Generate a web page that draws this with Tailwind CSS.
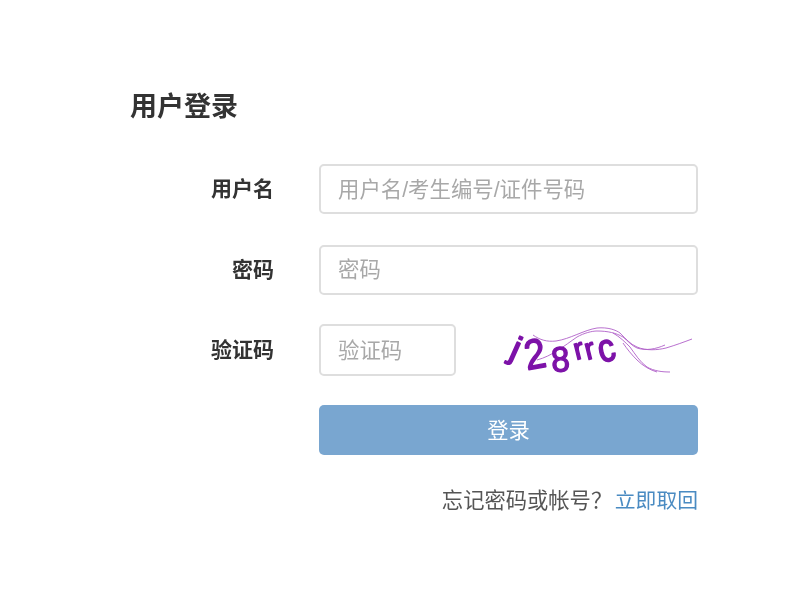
<!DOCTYPE html>
<html lang="zh">
<head>
<meta charset="utf-8">
<script src="https://cdn.jsdelivr.net/npm/@tailwindcss/browser@4"></script>
</head>
<body class="bg-white font-['Liberation_Sans','Noto_Sans_CJK_SC',sans-serif]">
<div class="w-[800px] h-[594px] overflow-hidden pl-[130px] pr-[102px] pt-[91px] text-[#333] blur-[0.5px]">
  <h1 class="text-[27px] leading-[32px] font-bold h-[73px]">用户登录</h1>
  <form class="flex flex-col gap-[30px]">
    <div class="flex items-center h-[50px]">
      <label class="w-[144px] text-right text-[21px] font-bold leading-[50px]">用户名</label>
      <div class="ml-[45px] flex-1 h-[50px] border-2 border-[#dedede] rounded-[5px] pl-[17px] text-[21.4px] leading-[49px] text-[#a8a8a8]">用户名/考生编号/证件号码</div>
    </div>
    <div class="flex items-center h-[50px] mt-px">
      <label class="w-[144px] text-right text-[21px] font-bold leading-[50px]">密码</label>
      <div class="ml-[45px] flex-1 h-[50px] border-2 border-[#dedede] rounded-[5px] pl-[17px] text-[21.4px] leading-[47px] text-[#a8a8a8]">密码</div>
    </div>
    <div class="flex items-center h-[52px] -mt-[1px]">
      <label class="w-[144px] text-right text-[21px] font-bold leading-[50px]">验证码</label>
      <div class="ml-[45px] w-[137px] h-[52px] border-2 border-[#dedede] rounded-[5px] pl-[17px] text-[21.4px] leading-[51px] text-[#a8a8a8]">验证码</div>
      <svg class="ml-[44px] block overflow-visible" width="197" height="52" viewBox="0 0 197 52" fill="none">
        <g stroke="#b060c8" stroke-width="0.9" fill="none">
          <path d="M33 11 C40 16 47 18 56 17 C70 15 84 6 97 4 C108 3 116 6 120 9 C126 15 130 20 137 23 C146 27 158 26 166 24 C176 21 184 18 192 15"/>
          <path d="M37 36 C52 32 64 22 77 13 C84 9 92 7 97 7 C108 7 116 9 123 13 C128 17 132 22 137 24 C146 27 156 25 165 21"/>
          <path d="M113 9 C120 13 125 18 130 23 C135 30 140 38 147 43 C154 47 162 48 170 48"/>
          <path d="M123 19 C127 25 132 31 137 36 C143 42 150 46 157 48"/>
        </g>
        <g fill="#7d12a8" stroke="#7d12a8" stroke-width="1.4" stroke-linejoin="round" font-family="'Liberation Sans',sans-serif">
          <text transform="translate(8 33) rotate(24) scale(1.2 1.1)" font-size="30">j</text>
          <text transform="translate(27 46) rotate(-10) scale(0.95 1.05)" font-size="40">2</text>
          <text transform="translate(52 48) rotate(-4) scale(0.95 1)" font-size="35">8</text>
          <text transform="translate(76 36) rotate(-14)" font-size="30">r</text>
          <text transform="translate(87 36) rotate(-14)" font-size="30">r</text>
          <text transform="translate(101 39) rotate(-14) scale(1 1.15)" font-size="34">c</text>
        </g>
      </svg>
    </div>
    <div class="flex -mt-[1px]">
      <div class="ml-[189px] flex-1 h-[50px] rounded-[5px] bg-[#79a6d0] text-white text-[21.3px] leading-[52px] text-center">登录</div>
    </div>
    <p class="mt-px text-right text-[21.3px] leading-[30px] text-[#555]"><span class="mr-[2.6px]">忘记密码或帐号？</span><a class="text-[20.8px] text-[#4a8bc2]">立即取回</a></p>
  </form>
</div>
</body>
</html>
